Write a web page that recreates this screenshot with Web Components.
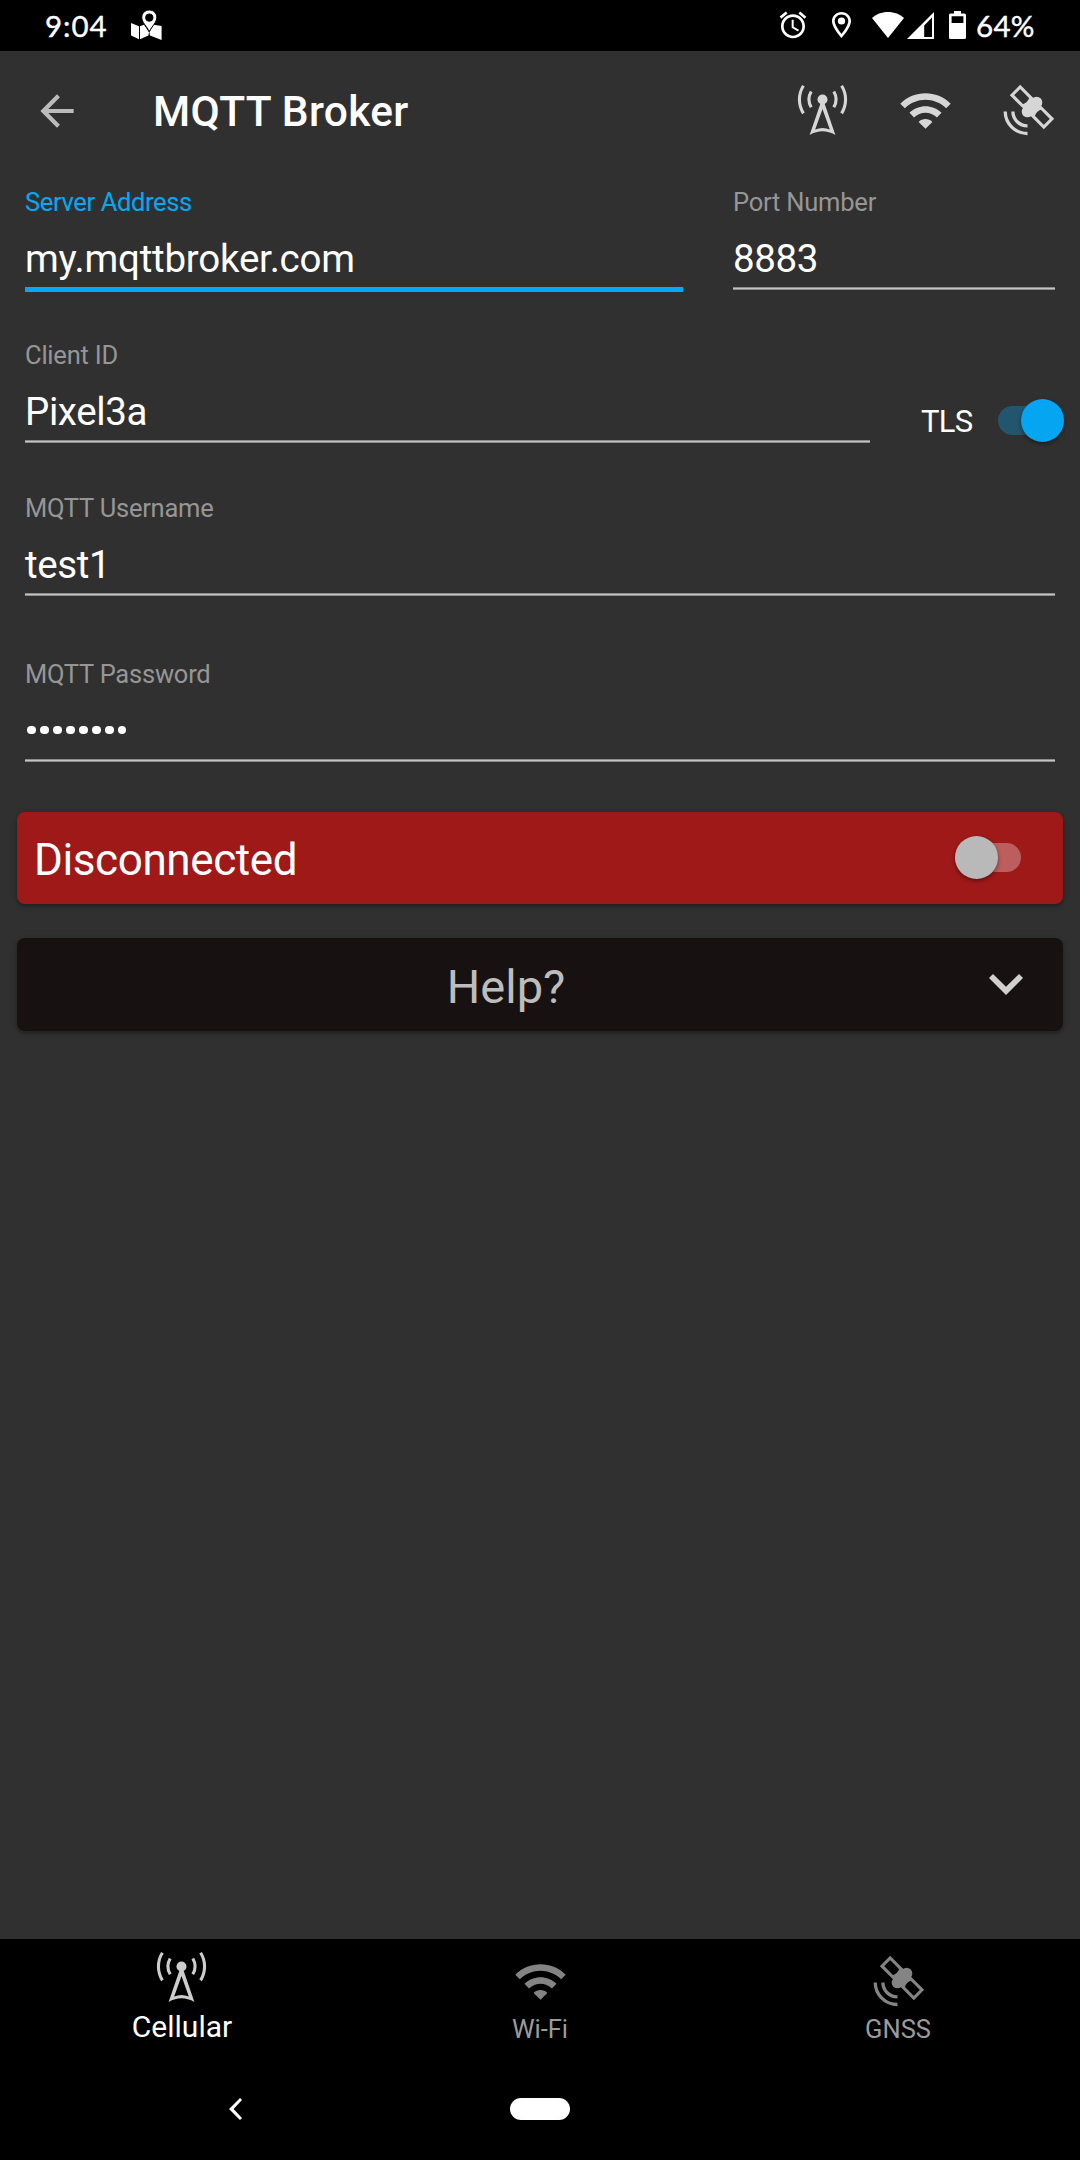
<!DOCTYPE html>
<html lang="en">
<head>
<meta charset="utf-8">
<title>MQTT Broker</title>
<style>
html,body{margin:0;padding:0;background:#303030}
body{width:1080px;height:2160px;overflow:hidden;font-family:Roboto,"Noto Sans",sans-serif;color:#fff}
</style>
</head>
<body>
<broker-app></broker-app>
<script>
const define = (name, render) => customElements.define(name, class extends HTMLElement {
  connectedCallback() {
    if (this.shadowRoot) return;
    this.attachShadow({ mode: 'open' }).innerHTML = render(this);
  }
});

const GLYPHS = {
  tower: ['-3 -1.5 55 55', `<g fill="none" stroke="currentColor" stroke-width="3.1"><path d="M5.4 1.3A26 26 0 0 0 5.4 28.9M43.6 1.3A26 26 0 0 1 43.6 28.9M13.2 7A15.5 15.5 0 0 0 13.2 22.8M35.8 7A15.5 15.5 0 0 1 35.8 22.8"/></g><circle cx="24.5" cy="15" r="5"/><path fill-rule="evenodd" d="M22.8 18L11.6 50.5Q24.5 43 37.4 50.5L26.2 18ZM24.5 24.5L31.8 45Q24.5 42 17.2 45Z"/>`],
  wifi: ['0 0 24 24', `<path d="M1 9l2 2c4.97-4.97 13.03-4.97 18 0l2-2C16.93 2.93 7.08 2.93 1 9zm8 8l3 3 3-3c-1.65-1.66-4.34-1.66-6 0zm-4-4l2 2c2.76-2.76 7.24-2.76 10 0l2-2C15.14 9.14 8.87 9.14 5 13z"/>`],
  satellite: ['0 0 55 55', `<g transform="translate(31 24) rotate(45)"><g fill="none" stroke="currentColor" stroke-width="3.1"><path d="M-4 5.8H-22.5V-5.8H-4M4 5.8H22.5V-5.8H4"/></g><path d="M-9 -5.8L-5 -7V7L-9 5.8Q-5.500 0-9 -5.8ZM9 -5.8L5 -7V7L9 5.8Q5.5 0 9 -5.8Z"/><rect x="-5.8" y="-12.2" width="11.6" height="24.4" rx="5.8"/><rect x="-6.6" y="-5" width="13.2" height="10"/></g><path d="M4.2 28.5A22.2 22.2 0 0 0 26.5 50.5M11.9 28.5A14.5 14.5 0 0 0 26.5 42.9" fill="none" stroke="currentColor" stroke-width="3.3"/>`],
  back: ['0 0 24 24', `<path d="M20 11H7.83l5.59-5.59L12 4l-8 8 8 8 1.41-1.41L7.83 13H20v-2z"/>`],
  alarm: ['0 0 24 24', `<path d="M22 5.72l-4.6-3.86-1.29 1.53 4.6 3.86L22 5.72zM7.88 3.39L6.6 1.86 2 5.71l1.29 1.53 4.59-3.85zM12.5 8H11v6l4.75 2.85.75-1.23-4-2.37V8zM12 4c-4.97 0-9 4.03-9 9s4.02 9 9 9c4.97 0 9-4.03 9-9s-4.03-9-9-9zm0 16c-3.87 0-7-3.13-7-7s3.13-7 7-7 7 3.13 7 7-3.13 7-7 7z"/>`],
  pin: ['5 2 14 20', `<path fill-rule="evenodd" d="M12 2C8.13 2 5 5.13 5 9c0 5.25 7 13 7 13s7-7.75 7-13c0-3.87-3.13-7-7-7zM7 9c0-2.76 2.24-5 5-5s5 2.24 5 5c0 2.88-2.88 7.19-5 9.88C9.92 16.21 7 11.85 7 9z"/><circle cx="12" cy="9" r="2.7"/>`],
  map: ['0 0 31 31', `<path d="M0 13L8 16.2V29.2L0 25.6ZM9 16.2L13 14.8L18 22.3L17.4 25.5L9 29.2ZM30.6 16V30L19 25.4L18.4 22.3L22.6 14.8Z"/><path fill-rule="evenodd" stroke="#000" stroke-width="1" d="M18.3 0C14 0 10.8 3.2 10.8 7.3C10.8 12.6 15.6 16 18.3 21.6C21 16 25.8 12.6 25.8 7.3C25.8 3.2 22.6 0 18.3 0ZM18.3 3.9A3.7 3.7 0 1 1 18.3 11.3A3.7 3.7 0 1 1 18.3 3.9Z"/>`],
  fan: ['0 0 32 26', `<path d="M16 0C9.8 0 4 2.3 0 6L16 26L32 6C28 2.3 22.2 0 16 0Z"/>`],
  signal: ['0 0 27 27', `<path fill-rule="evenodd" d="M27 0V27H0ZM25 5.500V25H17.200V13.500Z"/>`],
  battery: ['0 0 17 28', `<path fill-rule="evenodd" d="M5 0H12V2.6H15.5Q17 2.6 17 4.1V26.5Q17 28 15.5 28H1.5Q0 28 0 26.500V4.1Q0 2.6 1.5 2.6H5ZM2.6 5.2V12H14.4V5.2Z"/>`],
  down: ['0 0 34 21', `<path d="M4 0L17 12.8L30 0L34 4L17 21L0 4Z"/>`],
  navback: ['0 0 13 22', `<path d="M11 0L13 2L4.6 11L13 20L11 22L0 11Z"/>`]
};
define('app-icon', el => {
  const [box, body] = GLYPHS[el.getAttribute('name')];
  return `<style>:host{display:block;flex:none;width:var(--w,55px);height:var(--h,var(--w,55px))}svg{display:block;width:100%;height:100%}</style><svg viewBox="${box}" preserveAspectRatio="none" fill="currentColor">${body}</svg>`;
});

define('status-bar', () => `<style>
:host{display:flex;height:51px;background:#000;color:#fff;align-items:flex-start;font-family:Lato,sans-serif;font-size:29.5px;line-height:36px}
.t{padding-top:8px;-webkit-text-stroke:.4px #fff}
.time{margin-left:45px;width:86px;letter-spacing:1px}
.grow{flex:1}.pct{margin-left:10px;width:104px;letter-spacing:.3px}
</style>
<span class="t time">9:04</span><app-icon name="map" style="--w:31px;margin-top:10px"></app-icon>
<span class="grow"></span>
<app-icon name="alarm" style="--w:32px;margin:9px 0 0 0"></app-icon>
<app-icon name="pin" style="--w:19px;--h:26px;margin:12px 0 0 23px"></app-icon>
<app-icon name="fan" style="--w:32px;--h:26px;margin:12px 0 0 21px"></app-icon>
<app-icon name="signal" style="--w:27px;margin:12px 0 0 3px"></app-icon>
<app-icon name="battery" style="--w:17px;--h:28px;margin:11px 0 0 15px"></app-icon>
<span class="t pct">64%</span>`);

define('tool-bar', () => `<style>
:host{display:flex;height:118px;align-items:center;color:#d6d6d6;box-sizing:border-box;padding:0 24px 0 32px}
h1{margin:4px 0 0 71px;font-size:42.5px;line-height:50px;font-weight:500;color:#fff;flex:1;white-space:nowrap;letter-spacing:.3px}
nav{display:flex;gap:48px}
</style><app-icon name="back" style="--w:50px;color:#bbb;margin-top:1px"></app-icon><h1><slot></slot></h1>
<nav><app-icon name="tower"></app-icon><app-icon name="wifi"></app-icon><app-icon name="satellite"></app-icon></nav>`);

define('text-field', el => `<style>
:host{display:flex;flex-direction:column;flex:none;box-sizing:border-box;color:#fff}
.l{font-size:25.5px;line-height:32px;height:32px;color:#969696;white-space:nowrap;letter-spacing:-.22px}
.v{font-size:38.5px;line-height:46px;height:46px;margin-top:18px;white-space:nowrap;letter-spacing:-.4px}
.u{margin-top:5px;height:3px;background:linear-gradient(#8c8c8c 0 1px,#c4c4c4 1px 2px,#8c8c8c 2px)}
:host([focused]) .l{color:#03a9f4;letter-spacing:-.36px}
:host([focused]) .v{letter-spacing:-.22px}
:host([focused]) .u{height:5px;background:#03a9f4}
.v.dots{display:flex;gap:4.4px;align-items:center;padding-left:2px;letter-spacing:0}
.dots i{width:8.6px;height:8.6px;border-radius:50%;background:#fff;margin-bottom:2px}
</style><div class="l">${el.getAttribute('label')}</div>
${el.hasAttribute('masked') ? '<div class="v dots">' + '<i></i>'.repeat(8) + '</div>' : '<div class="v"><slot></slot></div>'}
<div class="u"></div>`);

define('toggle-switch', () => `<style>
:host{display:flex;align-items:center;width:66px;height:43px;flex:none}
.track{width:66px;height:29px;border-radius:15px;background:rgba(255,255,255,.3);display:flex;align-items:center}
.thumb{width:43px;height:43px;border-radius:50%;background:#b9b9b9;flex:none;box-shadow:0 2px 4px rgba(0,0,0,.4)}
:host([on]) .track{background:#22566f;justify-content:flex-end}
:host([on]) .thumb{background:#05a5f1}
</style><div class="track"><div class="thumb"></div></div>`);

define('panel-card', () => `<style>
:host{display:flex;align-items:center;box-sizing:border-box;height:92px;margin:0 17px;border-radius:8px;box-shadow:0 2px 5px rgba(0,0,0,.38)}
</style><slot></slot>`);

define('tab-item', el => `<style>
:host{display:flex;flex-direction:column;align-items:center;flex:none;color:#848484;padding-top:15px;box-sizing:border-box}
.t{font-size:25.5px;line-height:34px;color:#9b9b9b;margin-top:3px;white-space:nowrap}
:host([active]){color:#cdcdcd;padding-top:11px}
:host([active]) .t{font-size:30px;color:#fff;margin-top:5px;padding-left:1px}
</style><app-icon name="${el.getAttribute('icon')}"></app-icon><span class="t"><slot></slot></span>`);

define('system-nav', () => `<style>
:host{display:flex;height:62px;padding-left:229px;align-items:flex-start}
.pill{width:60px;height:22px;border-radius:11px;background:#fff;margin-left:268px}
</style><app-icon name="navback" style="--w:13px;--h:22px;color:#fff"></app-icon><span class="pill"></span>`);

define('broker-app', () => `<style>
:host{display:flex;flex-direction:column;width:1080px;height:2160px;background:#303030}
form{display:flex;flex-direction:column;margin:17px 0 0;padding:0 25px}
.r{display:flex;height:153px}
.tls{display:flex;align-items:center;height:43px;margin:60px -9px 0 51px;font-size:31px}
.tls span{width:77px;line-height:44px;padding-top:2px;letter-spacing:-.7px}
.dis{flex:1;padding:4px 0 0 17px;font-size:44px;line-height:52px;letter-spacing:-.4px}
.help{flex:1;text-align:center;font-size:47px;line-height:56px;color:#bdbdbd;padding:4px 0 0 6px}
footer{margin-top:auto;background:#000;height:221px;display:flex;flex-direction:column}
.tabs{display:flex;height:159px}
</style>
<status-bar></status-bar>
<tool-bar>MQTT Broker</tool-bar>
<form>
<div class="r"><text-field focused label="Server Address" style="width:658px">my.mqttbroker.com</text-field><text-field label="Port Number" style="width:322px;margin-left:50px">8883</text-field></div>
<div class="r"><text-field label="Client ID" style="width:845px">Pixel3a</text-field><div class="tls"><span>TLS</span><toggle-switch on></toggle-switch></div></div>
<div class="r" style="height:166px"><text-field label="MQTT Username" style="width:1030px">test1</text-field></div>
<div class="r" style="height:154px"><text-field label="MQTT Password" masked style="width:1030px"></text-field></div>
</form>
<panel-card style="background:#9f1919"><span class="dis">Disconnected</span><toggle-switch style="margin:0 42px 2px 0"></toggle-switch></panel-card>
<panel-card style="background:#171211;margin-top:34px;height:93px"><span class="help">Help?</span><app-icon name="down" style="--w:34px;--h:21px;margin-right:40px;color:#d0d0d0"></app-icon></panel-card>
<footer><div class="tabs"><tab-item icon="tower" active style="width:363px">Cellular</tab-item><tab-item icon="wifi" style="width:354px">Wi-Fi</tab-item><tab-item icon="satellite" style="width:362px">GNSS</tab-item></div><system-nav></system-nav></footer>`);
</script>
</body>
</html>
